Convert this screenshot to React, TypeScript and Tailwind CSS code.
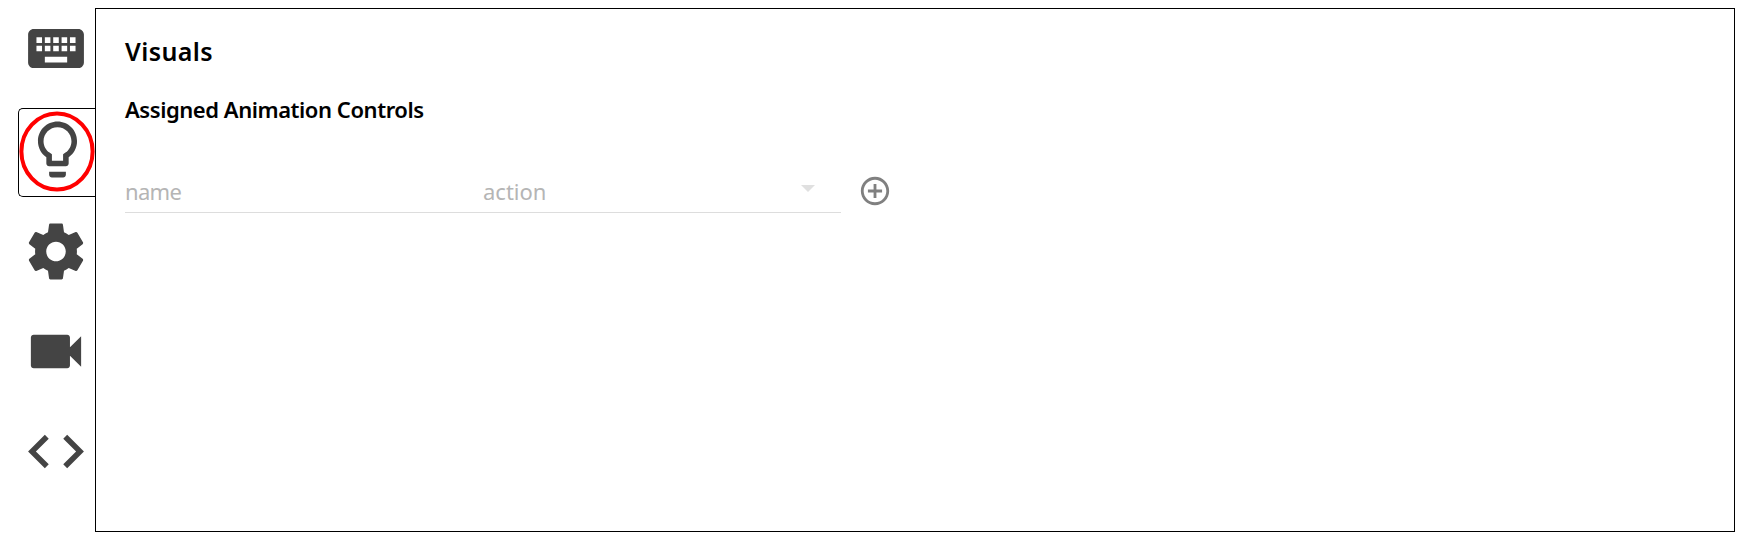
import React from "react";

const icons = {
  keyboard:
    "M20 5H4c-1.1 0-1.99.9-1.99 2L2 17c0 1.1.9 2 2 2h16c1.1 0 2-.9 2-2V7c0-1.1-.9-2-2-2zm-9 3h2v2h-2V8zm0 3h2v2h-2v-2zM8 8h2v2H8V8zm0 3h2v2H8v-2zm-1 2H5v-2h2v2zm0-3H5V8h2v2zm9 7H8v-2h8v2zm0-4h-2v-2h2v2zm0-3h-2V8h2v2zm3 3h-2v-2h2v2zm0-3h-2V8h2v2z",
  bulb: "M9 21c0 .55.45 1 1 1h4c.55 0 1-.45 1-1v-1H9v1zm3-19C8.14 2 5 5.14 5 9c0 2.38 1.19 4.47 3 5.74V17c0 .55.45 1 1 1h6c.55 0 1-.45 1-1v-2.26c1.81-1.27 3-3.36 3-5.74 0-3.86-3.14-7-7-7zm2.85 11.1l-.85.6V16h-4v-2.3l-.85-.6C7.8 12.16 7 10.63 7 9c0-2.76 2.24-5 5-5s5 2.24 5 5c0 1.63-.8 3.16-2.15 4.1z",
  settings:
    "M19.43 12.98c.04-.32.07-.64.07-.98s-.03-.66-.07-.98l2.11-1.65c.19-.15.24-.42.12-.64l-2-3.46c-.12-.22-.39-.3-.61-.22l-2.49 1c-.52-.4-1.08-.73-1.69-.98l-.38-2.65C14.46 2.18 14.25 2 14 2h-4c-.25 0-.46.18-.49.42l-.38 2.65c-.61.25-1.17.59-1.69.98l-2.49-1c-.23-.09-.49 0-.61.22l-2 3.46c-.13.22-.07.49.12.64l2.11 1.65c-.04.32-.07.65-.07.98s.03.66.07.98l-2.11 1.65c-.19.15-.24.42-.12.64l2 3.46c.12.22.39.3.61.22l2.49-1c.52.4 1.08.73 1.69.98l.38 2.65c.03.24.24.42.49.42h4c.25 0 .46-.18.49-.42l.38-2.65c.61-.25 1.17-.59 1.69-.98l2.49 1c.23.09.49 0 .61-.22l2-3.46c.12-.22.07-.49-.12-.64l-2.11-1.65zM12 15.5c-1.93 0-3.5-1.57-3.5-3.5s1.57-3.5 3.5-3.5 3.5 1.57 3.5 3.5-1.57 3.5-3.5 3.5z",
  camera:
    "M17 10.5V7c0-.55-.45-1-1-1H4c-.55 0-1 .45-1 1v10c0 .55.45 1 1 1h12c.55 0 1-.45 1-1v-3.5l4 4v-11l-4 4z",
  code: "M9.4 16.6L4.8 12l4.6-4.6L8 6l-6 6 6 6 1.4-1.4zm5.2 0l4.6-4.6-4.6-4.6L16 6l6 6-6 6-1.4-1.4z",
  add: "M13 7h-2v4H7v2h4v4h2v-4h4v-2h-4V7zm-1-5C6.49 2 2 6.49 2 12s4.49 10 10 10 10-4.49 10-10S17.51 2 12 2zm0 18c-4.41 0-8-3.59-8-8s3.59-8 8-8 8 3.59 8 8-3.59 8-8 8z",
};

function Icon({
  path,
  className,
  viewBox = "0 0 24 24",
}: {
  path: string;
  className: string;
  viewBox?: string;
}) {
  return (
    <svg viewBox={viewBox} fill="currentColor" className={className} aria-hidden="true">
      <path d={path} />
    </svg>
  );
}

function Tab({ path, label }: { path: string; label: string }) {
  return (
    <button aria-label={label} className="flex h-[67px] w-[76px] items-center justify-center text-[#444]">
      <Icon path={path} viewBox="-0.18 0 24.36 24" className="h-[67px] w-[68px]" />
    </button>
  );
}

export default function App() {
  return (
    <div className="flex h-[547px] w-full bg-white pt-2 pr-[10px] pb-[15px] pl-[18px] font-['Noto_Sans',sans-serif] text-black">
      <nav className="flex w-[77px] shrink-0 flex-col pt-[7px]">
        <Tab path={icons.keyboard} label="Keyboard" />
        <button
          aria-label="Visuals"
          className="relative mt-[26px] flex h-[89px] w-[77px] items-center justify-center rounded-l-[5px] border border-r-0 border-black text-[#444]"
        >
          <Icon path={icons.bulb} className="-mt-[6px] size-[67px]" />
          <svg viewBox="0 0 77 89" fill="none" className="absolute -top-px -left-px h-[89px] w-[77px] overflow-visible">
            <ellipse cx="39" cy="43.5" rx="35.6" ry="38" stroke="#f00" strokeWidth="4" />
          </svg>
        </button>
        <div className="flex flex-col gap-[33px] pt-[21px]">
          <Tab path={icons.settings} label="Settings" />
          <Tab path={icons.camera} label="Camera" />
          <Tab path={icons.code} label="Code" />
        </div>
      </nav>
      <main className="min-w-0 flex-1 border border-black pt-[25px] pl-[29px]">
        <h1 className="text-[25px] leading-[34px] font-semibold tracking-[0.4px]">Visuals</h1>
        <h2 className="mt-[26px] text-[22px] leading-[30px] font-semibold tracking-[-0.45px]">
          Assigned Animation Controls
        </h2>
        <div className="mt-[45px] flex items-start">
          <div className="flex h-[44px] w-[716px] border-b border-[#ddd] text-[22px] leading-[44px] text-[#b5b5b5]">
            <div className="w-[358px] tracking-[-0.7px]">name</div>
            <div className="flex flex-1 justify-between pr-[26px]">
              <span>action</span>
              <svg viewBox="0 0 14 7" className="mt-4 h-[7px] w-[14px]" fill="#e0e0e0">
                <path d="M0 0h14L7 7z" />
              </svg>
            </div>
          </div>
          <button aria-label="Add control" className="mt-[5px] ml-[17px] text-[#808080]">
            <Icon path={icons.add} className="size-[34px]" />
          </button>
        </div>
      </main>
    </div>
  );
}
